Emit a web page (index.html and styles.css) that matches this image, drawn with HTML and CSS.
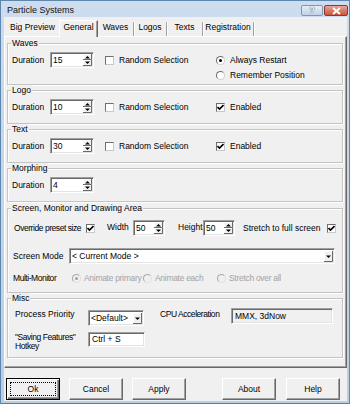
FILE: index.html
```html
<!DOCTYPE html>
<html lang="en">
<head>
<meta charset="utf-8">
<title>Particle Systems</title>
<link rel="stylesheet" href="styles.css">
</head>
<body>
<div class="window">
  <div class="titlebar">
    <span class="title">Particle Systems</span>
    <div class="caption">
      <span class="cap-btn cap-help">?</span>
      <span class="cap-btn cap-close"><svg width="11" height="8" viewBox="0 0 11 8"><path d="M2 1L9 7M9 1L2 7" stroke="#fff" stroke-width="2"/></svg></span>
    </div>
  </div>
  <div class="client">
    <div class="tabs">
      <span class="tab t-big">Big Preview</span>
      <span class="tab tab-sel t-gen">General</span>
      <span class="tab t-waves">Waves</span>
      <span class="tab t-logos">Logos</span>
      <span class="tab t-texts">Texts</span>
      <span class="tab t-reg">Registration</span>
    </div>
    <div class="panel">
      <div class="group g-waves">
        <span class="legend">Waves</span>
        <div class="grid grid-waves">
          <span class="lbl">Duration</span>
          <span class="spin w44"><span class="val">15</span><svg class="sb" width="9" height="12" viewBox="0 0 9 12"><rect width="9" height="12" fill="#f0f0f0"/><path d="M0.5 5V0.5H8M0.5 11V6.5H8" stroke="#fff" fill="none"/><path d="M8.5 0V5.5H0M8.5 6V11.5H0" stroke="#696969" fill="none"/><path d="M4.5 2L2 4.5H7Z M2 7.5H7L4.5 10Z" fill="#000"/></svg></span>
          <span class="check-item"><span class="cb"></span>Random Selection</span>
          <span class="radio-item"><span class="rb rb-on"></span>Always Restart</span>
          <span class="radio-item r2"><span class="rb"></span>Remember Position</span>
        </div>
      </div>

      <div class="group g-small">
        <span class="legend">Logo</span>
        <div class="grid">
          <span class="lbl">Duration</span>
          <span class="spin w44"><span class="val">10</span><svg class="sb" width="9" height="12" viewBox="0 0 9 12"><rect width="9" height="12" fill="#f0f0f0"/><path d="M0.5 5V0.5H8M0.5 11V6.5H8" stroke="#fff" fill="none"/><path d="M8.5 0V5.5H0M8.5 6V11.5H0" stroke="#696969" fill="none"/><path d="M4.5 2L2 4.5H7Z M2 7.5H7L4.5 10Z" fill="#000"/></svg></span>
          <span class="check-item"><span class="cb"></span>Random Selection</span>
          <span class="check-item en"><span class="cb cb-on"><svg width="7" height="7" viewBox="0 0 7 7"><path d="M0.5 3L2.5 5L6.5 1" stroke="#000" stroke-width="1.6" fill="none"/></svg></span>Enabled</span>
        </div>
      </div>

      <div class="group g-small">
        <span class="legend">Text</span>
        <div class="grid">
          <span class="lbl">Duration</span>
          <span class="spin w44"><span class="val">30</span><svg class="sb" width="9" height="12" viewBox="0 0 9 12"><rect width="9" height="12" fill="#f0f0f0"/><path d="M0.5 5V0.5H8M0.5 11V6.5H8" stroke="#fff" fill="none"/><path d="M8.5 0V5.5H0M8.5 6V11.5H0" stroke="#696969" fill="none"/><path d="M4.5 2L2 4.5H7Z M2 7.5H7L4.5 10Z" fill="#000"/></svg></span>
          <span class="check-item"><span class="cb"></span>Random Selection</span>
          <span class="check-item en"><span class="cb cb-on"><svg width="7" height="7" viewBox="0 0 7 7"><path d="M0.5 3L2.5 5L6.5 1" stroke="#000" stroke-width="1.6" fill="none"/></svg></span>Enabled</span>
        </div>
      </div>

      <div class="group g-small g-morph">
        <span class="legend">Morphing</span>
        <div class="grid">
          <span class="lbl">Duration</span>
          <span class="spin w44"><span class="val">4</span><svg class="sb" width="9" height="12" viewBox="0 0 9 12"><rect width="9" height="12" fill="#f0f0f0"/><path d="M0.5 5V0.5H8M0.5 11V6.5H8" stroke="#fff" fill="none"/><path d="M8.5 0V5.5H0M8.5 6V11.5H0" stroke="#696969" fill="none"/><path d="M4.5 2L2 4.5H7Z M2 7.5H7L4.5 10Z" fill="#000"/></svg></span>
        </div>
      </div>

      <div class="group g-screen">
        <span class="legend">Screen, Monitor and Drawing Area</span>
        <div class="srow r-override">
          <span class="lbl w72 narrow">Override preset size</span>
          <span class="cb cb-on"><svg width="7" height="7" viewBox="0 0 7 7"><path d="M0.5 3L2.5 5L6.5 1" stroke="#000" stroke-width="1.6" fill="none"/></svg></span>
          <span class="lbl lbl-width">Width</span>
          <span class="spin w32"><span class="val">50</span><svg class="sb" width="9" height="12" viewBox="0 0 9 12"><rect width="9" height="12" fill="#f0f0f0"/><path d="M0.5 5V0.5H8M0.5 11V6.5H8" stroke="#fff" fill="none"/><path d="M8.5 0V5.5H0M8.5 6V11.5H0" stroke="#696969" fill="none"/><path d="M4.5 2L2 4.5H7Z M2 7.5H7L4.5 10Z" fill="#000"/></svg></span>
          <span class="lbl lbl-height">Height</span>
          <span class="spin w32"><span class="val">50</span><svg class="sb" width="9" height="12" viewBox="0 0 9 12"><rect width="9" height="12" fill="#f0f0f0"/><path d="M0.5 5V0.5H8M0.5 11V6.5H8" stroke="#fff" fill="none"/><path d="M8.5 0V5.5H0M8.5 6V11.5H0" stroke="#696969" fill="none"/><path d="M4.5 2L2 4.5H7Z M2 7.5H7L4.5 10Z" fill="#000"/></svg></span>
          <span class="lbl lbl-stretch">Stretch to full screen</span>
          <span class="cb cb-on"><svg width="7" height="7" viewBox="0 0 7 7"><path d="M0.5 3L2.5 5L6.5 1" stroke="#000" stroke-width="1.6" fill="none"/></svg></span>
        </div>
        <div class="srow r-mode">
          <span class="lbl w56">Screen Mode</span>
          <span class="select w266"><span class="val">&lt; Current Mode &gt;</span><svg class="dd" width="9" height="11" viewBox="0 0 9 11"><rect width="9" height="11" fill="#f0f0f0"/><path d="M0.5 10V0.5H8" stroke="#fff" fill="none"/><path d="M8.5 0V10.5H0" stroke="#696969" fill="none"/><path d="M2 4.5H7L4.5 7Z" fill="#000"/></svg></span>
        </div>
        <div class="srow r-multi">
          <span class="lbl w59 narrow">Multi-Monitor</span>
          <span class="radio-item dis w71"><span class="rb rb-on"></span>Animate primary</span>
          <span class="radio-item dis w74"><span class="rb"></span>Animate each</span>
          <span class="radio-item dis"><span class="rb"></span>Stretch over all</span>
        </div>
      </div>

      <div class="group g-misc">
        <span class="legend">Misc</span>
        <div class="mrow m1">
          <span class="lbl w73 lh15">Process Priority</span>
          <span class="select w56 mt3"><span class="val">&lt;Default&gt;</span><svg class="dd" width="9" height="11" viewBox="0 0 9 11"><rect width="9" height="11" fill="#f0f0f0"/><path d="M0.5 10V0.5H8" stroke="#fff" fill="none"/><path d="M8.5 0V10.5H0" stroke="#696969" fill="none"/><path d="M2 4.5H7L4.5 7Z" fill="#000"/></svg></span>
          <span class="lbl lbl-cpu lh15 narrow">CPU Acceleration</span>
          <span class="field ro w102 mt1">MMX, 3dNow</span>
        </div>
        <div class="mrow m2">
          <span class="lbl w73 two narrow">"Saving Features"<br>Hotkey</span>
          <span class="field w57">Ctrl + S</span>
        </div>
      </div>
    </div>
    <div class="buttons">
      <span class="btn btn-default">Ok</span>
      <span class="btn ml9">Cancel</span>
      <span class="btn ml9">Apply</span>
      <span class="btn ml36">About</span>
      <span class="btn ml10">Help</span>
    </div>
  </div>
</div>
</body>
</html>
```

FILE: styles.css
```css
* { box-sizing: border-box; margin: 0; padding: 0; }
html, body { width: 350px; height: 404px; overflow: hidden; background: #fff; }
body { font-family: "Liberation Sans", Arial, sans-serif; font-size: 8.5px; line-height: 1; color: #000; }

.window {
  width: 350px; height: 404px;
  display: flex; flex-direction: column;
  background: linear-gradient(#cddcee, #b9cfe6);
  border: 1px solid #5f87ad;
  border-bottom-color: #2c8fb5;
  padding: 0 2px 2px 3px;
}

.titlebar { height: 16px; display: flex; justify-content: space-between; align-items: flex-start; margin-right: -2px; }
.title { font-size: 9px; padding: 5px 0 0 3px; color: #111; }
.caption { display: flex; margin-top: 4px; padding-right: 1px; }
.cap-btn { height: 11px; display: flex; align-items: center; justify-content: center; border: 1px solid #7d97b5; border-radius: 2px; }
.cap-help { width: 22px; background: linear-gradient(#e6eef8, #bed2e8); color: #f4f8fc; font-weight: bold; font-size: 9px; text-shadow: 0 0 1px #3d5f82, 0 0 1px #3d5f82; }
.cap-close { width: 24px; margin-left: 1px; background: linear-gradient(#e9a797, #c8533f); border-color: #8d3a2d; }

.client { flex: 1; background: #f0f0f0; display: flex; flex-direction: column; }

.tabs { height: 19px; display: flex; align-items: flex-end; padding-left: 2px; position: relative; z-index: 1; }
.tab { height: 14px; line-height: 10px; text-align: center; white-space: nowrap; border-right: 1px solid #a0a0a0; box-shadow: 1px 0 0 #fff; }
.t-big { width: 53px; border-right: none; box-shadow: none; }
.tab-sel { width: 39px; height: 17px; line-height: 12px; margin-bottom: -1px; background: #f0f0f0; border-top: 1px solid #fff; border-left: 1px solid #fff; border-right: 1px solid #696969; box-shadow: inset -1px 0 0 #a0a0a0; }
.t-waves { width: 36px; }
.t-logos { width: 33px; }
.t-texts { width: 36px; }
.t-reg { width: 51px; }

.panel {
  height: 332px;
  border: 1px solid; border-color: #fff #696969 #696969 #fff;
  box-shadow: inset -1px -1px 0 #a0a0a0;
  padding: 6px 0 0 2px;
  display: flex; flex-direction: column;
}

.group { position: relative; width: 336px; flex: none; border: 1px solid #c4c4c4; box-shadow: inset 1px 1px 0 #fff, 1px 1px 0 #fff; }
.legend { position: absolute; left: 3px; top: -6px; line-height: 10px; padding: 0 1px; background: #f0f0f0; white-space: nowrap; }
.g-waves { height: 42px; }
.g-small { height: 34px; margin-top: 5px; }
.g-morph { margin-top: 5px; }
.g-screen { height: 85px; margin-top: 6px; padding: 11px 0 0 5px; }
.g-misc { height: 60px; margin-top: 5px; padding: 8px 0 0 7px; }

.grid { display: grid; grid-template-columns: 38px 44px 122px 1fr; grid-auto-rows: 16px; align-items: center; padding: 8px 0 0 4px; }
.grid-waves { grid-template-rows: 16px 15px; }
.r2 { grid-column: 4; }

.lbl { white-space: nowrap; }
.narrow { letter-spacing: -0.45px; }

.spin, .select, .field {
  height: 16px; background: #fff;
  border: 1px solid; border-color: #a0a0a0 #fff #fff #a0a0a0;
  box-shadow: inset 1px 1px 0 #696969, inset -1px -1px 0 #e3e3e3;
  display: flex; align-items: center; justify-content: space-between;
  padding: 0 1px 0 2px; white-space: nowrap;
}
.val { padding-top: 1px; }
.sb, .dd { display: block; flex: none; }
.w44 { width: 44px; }
.w32 { width: 32px; }
.w266 { width: 266px; }
.w56 { width: 56px; }
.w57 { width: 57px; }
.w102 { width: 102px; }
.w72 { width: 72px; }
.w73 { width: 73px; }
.w59 { width: 59px; }
.w71 { width: 71px; }
.w74 { width: 74px; }

.check-item, .radio-item { display: flex; align-items: center; white-space: nowrap; }
.check-item { padding-left: 11px; }
.check-item.en { padding-left: 0; }
.cb {
  flex: none; width: 9px; height: 9px; margin-right: 5px; background: #fff;
  border: 1px solid; border-color: #6e6e6e #c8c8c8 #c8c8c8 #6e6e6e;
  display: flex; align-items: center; justify-content: center;
}
.cb svg { display: block; }
.rb { flex: none; width: 9px; height: 9px; margin-right: 5px; border-radius: 50%; background: #fff; border: 1px solid; border-color: #6e6e6e #d0d0d0 #d0d0d0 #6e6e6e; display: flex; align-items: center; justify-content: center; }
.rb-on::after { content: ""; width: 3px; height: 3px; border-radius: 50%; background: #000; }

.srow { display: flex; align-items: center; height: 16px; }
.r-override { margin-left: 1px; }
.r-override .cb { margin-right: 0; }
.lbl-width { margin-left: 12px; width: 26px; margin-top: -2px; }
.lbl-height { margin-left: 13px; width: 25px; margin-top: -2px; }
.lbl-stretch { margin-left: 8px; width: 84px; }
.r-mode { margin-top: 12px; }
.r-multi { margin-top: 6px; }
.dis { color: #a3a3a3; letter-spacing: -0.3px; }
.dis .rb { margin-right: 3px; background: #f0f0f0; border-color: #a8a8a8 #e0e0e0 #e0e0e0 #a8a8a8; }
.dis .rb-on::after { background: #a0a0a0; }

.mrow { display: flex; align-items: flex-start; }
.m1 { height: 19px; }
.m2 { margin-top: 6px; }
.lh15 { line-height: 15px; }
.mt3 { margin-top: 3px; }
.mt1 { margin-top: 1px; }
.lbl-cpu { width: 71px; margin-left: 16px; }
.two { line-height: 9px; padding-top: 1px; }
.field { justify-content: flex-start; padding-left: 3px; }
.m2 .field { height: 15px; }
.ro { background: #f0f0f0; }

.buttons { display: flex; padding-left: 2px; margin-top: 10px; }
.btn {
  position: relative; width: 54px; height: 22px; flex: none;
  display: flex; align-items: center; justify-content: center;
  border: 1px solid; border-color: #fff #696969 #696969 #fff;
  box-shadow: inset -1px -1px 0 #a0a0a0;
  background: #f0f0f0;
}
.btn-default { border-color: #000; box-shadow: inset 1px 1px 0 #fff, inset -1px -1px 0 #696969, inset -2px -2px 0 #a0a0a0; }
.btn-default::after { content: ""; position: absolute; left: 3px; top: 3px; right: 3px; bottom: 3px; border: 1px dotted #000; }
.ml9 { margin-left: 9px; }
.ml36 { margin-left: 36px; }
.ml10 { margin-left: 10px; }
```
